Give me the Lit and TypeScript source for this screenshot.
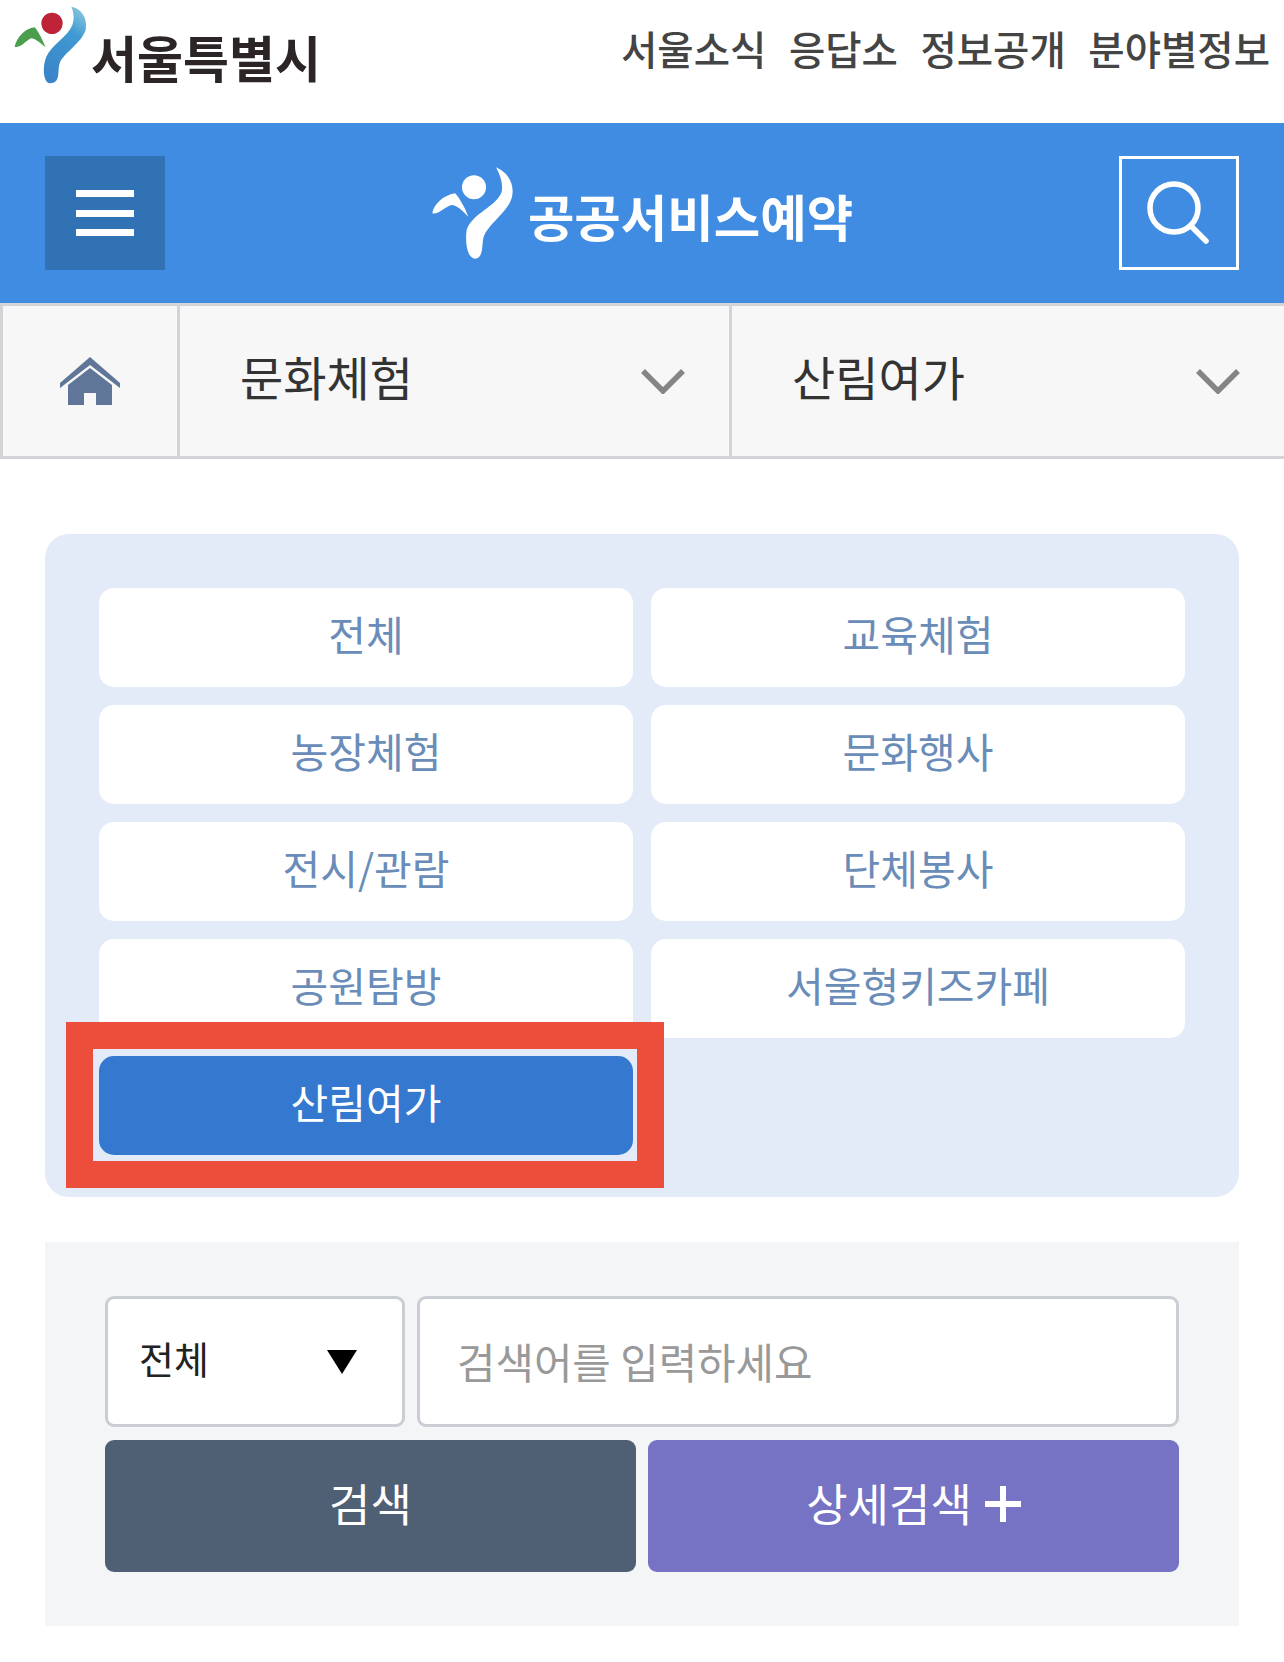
import { LitElement, css, html, svg } from "lit";
import { customElement, state } from "lit/decorators.js";

const chevron = html`<svg class="chevron" viewBox="0 0 44 26">
  <path d="M2 3 L22 23 L42 3" fill="none" stroke="#858585" stroke-width="5.5" />
</svg>`;

const seoulMark = svg`
  <defs>
    <linearGradient id="seoulBlue" x1="0.7" y1="0" x2="0.3" y2="1">
      <stop offset="0" stop-color="#7fc0dc" />
      <stop offset="0.3" stop-color="#3f9ad2" />
      <stop offset="1" stop-color="#3a84c8" />
    </linearGradient>
  </defs>
  <path fill="#4a9e4d" d="M45 140 C50 115 75 85 105 82 C120 100 130 125 138 142 C120 128 105 115 95 115 C80 120 65 145 45 140 Z" />
  <circle fill="#bf2337" cx="157" cy="70" r="32" />
  <path fill="url(#seoulBlue)" d="M215 20 C245 25 265 55 258 90 C245 130 190 160 180 190 C172 215 185 250 150 250 C130 245 128 200 140 170 C155 135 205 110 218 75 C225 55 222 35 215 20 Z" />
`;

const whiteMark = svg`
  <path d="M97 190 C100 165 130 135 165 130 C180 145 195 175 205 200 C185 180 170 165 155 165 C135 170 115 195 97 190 Z" />
  <circle cx="222" cy="112" r="36" />
  <path d="M288 52 C330 70 345 110 335 145 C320 190 260 225 250 265 C245 290 250 325 225 326 C200 325 195 270 200 240 C215 190 290 170 305 125 C310 100 300 75 288 52 Z" />
`;

@customElement("app-root")
export class AppRoot extends LitElement {
  @state()
  categories = ["전체", "교육체험", "농장체험", "문화행사", "전시/관람", "단체봉사", "공원탐방", "서울형키즈카페", "산림여가"];

  @state()
  selected = "산림여가";

  render() {
    return html`
      <div class="top">
        <div class="seoul">
          <svg class="seoul-mark" viewBox="40 15 225 240">${seoulMark}</svg>
          <span>서울특별시</span>
        </div>
        <nav class="top-links">
          <span>서울소식</span>
          <span>응답소</span>
          <span>정보공개</span>
          <span>분야별정보</span>
        </nav>
      </div>

      <header class="bar">
        <button class="menu-btn">
          <i></i><i></i><i></i>
        </button>
        <div class="brand">
          <svg class="brand-mark" viewBox="90 48 255 285" fill="#fff">${whiteMark}</svg>
          <span>공공서비스예약</span>
        </div>
        <button class="search-btn">
          <svg viewBox="0 0 64 64" width="64" height="64">
            <circle cx="27" cy="27" r="24" fill="none" stroke="#fff" stroke-width="5.5" />
            <path d="M44 45 L59 60" stroke="#fff" stroke-width="5.5" stroke-linecap="round" />
          </svg>
        </button>
      </header>

      <div class="crumbs">
        <div class="cell home">
          <svg viewBox="0 0 60 48" width="60" height="48">
            <path d="M30 0 L60 26 L60 31 L30 8 L0 31 L0 26 Z" fill="#5f7699" />
            <path d="M8 28 L30 11 L52 28 L52 48 L36 48 L36 36 L24 36 L24 48 L8 48 Z" fill="#5f7699" />
          </svg>
        </div>
        <div class="cell"><span>문화체험</span>${chevron}</div>
        <div class="cell"><span>산림여가</span>${chevron}</div>
      </div>

      <section class="panel">
        ${this.categories.map(c => html`
          <button class="cat ${c === this.selected ? "active" : ""}">
            ${c}
            ${c === this.selected ? html`<div class="highlight"></div>` : ""}
          </button>
        `)}
      </section>

      <section class="search">
        <div class="fields">
          <div class="select">
            <span>전체</span>
            <svg viewBox="0 0 30 24" width="30" height="24"><path d="M0 0 H30 L15 24 Z" fill="#000" /></svg>
          </div>
          <div class="input">검색어를 입력하세요</div>
        </div>
        <div class="actions">
          <button class="btn dark">검색</button>
          <button class="btn purple">
            상세검색
            <svg viewBox="0 0 36 36" width="36" height="36"><path d="M15 0 H21 V15 H36 V21 H21 V36 H15 V21 H0 V15 H15 Z" fill="#fff" /></svg>
          </button>
        </div>
      </section>
    `;
  }

  static styles = css`
    :host {
      display: block;
      width: 1284px;
      height: 1662px;
      background: #fff;
      font-family: "Noto Sans CJK KR", "Noto Sans", sans-serif;
      overflow: hidden;
    }

    button {
      font-family: inherit;
      border: none;
      padding: 0;
      margin: 0;
    }

    .top {
      height: 123px;
      display: flex;
      justify-content: space-between;
      padding: 0 14px 0 13px;
      box-sizing: border-box;
    }

    .seoul {
      display: flex;
      align-items: flex-start;
    }

    .seoul-mark {
      width: 75px;
      height: 80px;
      margin-top: 5px;
    }

    .seoul span {
      font-size: 50px;
      font-weight: 700;
      line-height: 1;
      color: #2b2526;
      margin: 31px 0 0 3px;
    }

    .top-links {
      display: flex;
      gap: 22.5px;
      padding-top: 28px;
      font-size: 39.5px;
      font-weight: 500;
      line-height: 40px;
      color: #444;
    }

    .bar {
      height: 180px;
      background: #408ce2;
      display: flex;
      align-items: center;
      justify-content: space-between;
      padding: 33px 45px;
      box-sizing: border-box;
    }

    .menu-btn {
      width: 120px;
      height: 114px;
      background: #3172b4;
      display: flex;
      flex-direction: column;
      align-items: center;
      justify-content: center;
      gap: 12.5px;
    }

    .menu-btn i {
      display: block;
      width: 58px;
      height: 7px;
      background: #fff;
    }

    .search-btn {
      width: 120px;
      height: 114px;
      background: transparent;
      border: 3px solid #fff;
      box-sizing: border-box;
      display: flex;
      align-items: center;
      justify-content: center;
    }

    .brand {
      display: flex;
      align-items: center;
      color: #fff;
      margin-right: 1px;
    }

    .brand-mark {
      width: 85px;
      height: 95px;
    }

    .brand span {
      font-size: 50.5px;
      font-weight: 700;
      line-height: 1;
      margin: 4px 0 0 13px;
    }

    .crumbs {
      height: 156px;
      box-sizing: border-box;
      display: grid;
      grid-template-columns: 180px 552px 552px;
      background: #f7f7f7;
      border-top: 3px solid #d2d4d8;
      border-bottom: 3px solid #d2d4d8;
    }

    .cell {
      display: flex;
      align-items: center;
      justify-content: space-between;
      padding: 0 44px 0 60px;
      border-right: 3px solid #d2d4d8;
      font-size: 47px;
      line-height: 1;
      color: #333;
    }

    .cell span {
      margin-bottom: 12px;
    }

    .cell:last-child {
      border-right: none;
    }

    .cell.home {
      justify-content: center;
      padding: 0;
      border-left: 3px solid #d2d4d8;
    }

    .chevron {
      width: 44px;
      height: 26px;
    }

    .panel {
      margin: 75px 45px 0;
      height: 663px;
      box-sizing: border-box;
      background: #e3eaf8;
      border-radius: 24px;
      padding: 54px;
      display: grid;
      grid-template-columns: 534px 534px;
      grid-auto-rows: 99px;
      column-gap: 18px;
      row-gap: 18px;
    }

    .cat {
      position: relative;
      background: #fff;
      color: #6a8cb8;
      border-radius: 15px;
      font-size: 41px;
      line-height: 1;
      padding-bottom: 8px;
    }

    .cat.active {
      background: #3478d0;
      color: #fff;
    }

    .highlight {
      position: absolute;
      top: -34px;
      left: -33px;
      right: -31px;
      bottom: -33px;
      border: solid #ec4e3b;
      border-width: 27px;
    }

    .search {
      margin: 45px 45px 0;
      height: 384px;
      box-sizing: border-box;
      background: #f4f5f7;
      padding: 54px 60px;
    }

    .fields {
      display: flex;
      gap: 12px;
      height: 131px;
    }

    .select,
    .input {
      background: #fff;
      border: 3px solid #cbcdd4;
      border-radius: 9px;
      box-sizing: border-box;
      display: flex;
      align-items: center;
    }

    .select {
      width: 300px;
      justify-content: space-between;
      padding: 0 45px 8px 31px;
      font-size: 38px;
      line-height: 1;
      color: #222;
    }

    .select svg {
      margin-top: 8px;
    }

    .input {
      flex: 1;
      padding: 1px 0 0 37px;
      font-size: 41.8px;
      line-height: 1;
      color: #999;
    }

    .actions {
      display: flex;
      gap: 12px;
      margin-top: 13px;
    }

    .btn {
      flex: 1;
      height: 132px;
      border-radius: 9px;
      color: #fff;
      font-size: 45px;
      line-height: 1;
      display: flex;
      align-items: center;
      justify-content: center;
      gap: 13px;
      padding-bottom: 8px;
    }

    .btn svg {
      margin-top: 4px;
    }

    .btn.dark {
      background: #4f5f74;
    }

    .btn.purple {
      background: #7672c4;
    }
  `;
}
